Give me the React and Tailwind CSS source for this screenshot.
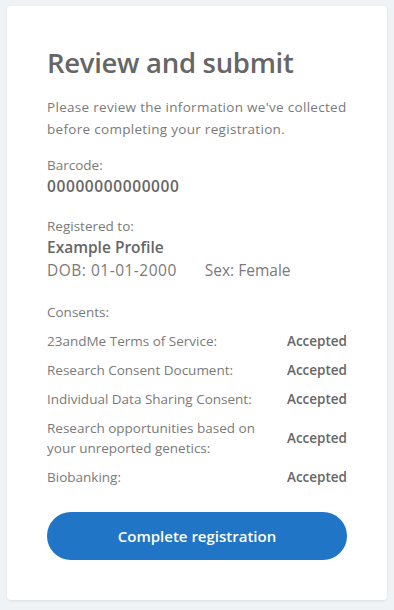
import React from 'react'

const consents = [
  { label: '23andMe Terms of Service:', value: 'Accepted' },
  { label: 'Research Consent Document:', value: 'Accepted' },
  { label: 'Individual Data Sharing Consent:', value: 'Accepted' },
  { label: 'Research opportunities based on your unreported genetics:', value: 'Accepted' },
  { label: 'Biobanking:', value: 'Accepted' },
]

export default function App() {
  return (
    <div
      className="min-h-screen bg-[#eff3f6] px-[7px] pt-[6px] pb-[10px]"
      style={{ fontFamily: '"Open Sans", Lato, sans-serif' }}
    >
      <div className="bg-white rounded-[4px] shadow-[0_1px_3px_rgba(0,0,0,0.08)] p-10 text-[#7a7a7a]">
        {/* Header */}
        <h1 className="text-[27.5px] leading-[34px] font-semibold tracking-[-0.3px] text-[#666666]">
          Review and submit
        </h1>
        <p className="mt-4 text-[13.5px] leading-[22px] tracking-[0.3px]">
          Please review the information we've collected before completing your registration.
        </p>

        {/* Barcode */}
        <div className="mt-[15px]">
          <div className="text-[13.5px] leading-[20px]">Barcode:</div>
          <div className="text-[15.5px] leading-[22px] font-semibold tracking-[0.6px] text-[#666666]">
            00000000000000
          </div>
        </div>

        {/* Profile */}
        <div className="mt-[19px]">
          <div className="text-[13.5px] leading-[20px]">Registered to:</div>
          <div className="text-[15.5px] leading-[22px] font-semibold text-[#666666]">
            Example Profile
          </div>
          <div className="flex gap-[28px] text-[15.5px] leading-[24px] text-[#7a7a7a]">
            <span className="tracking-[0.5px]">DOB: 01-01-2000</span>
            <span>Sex: Female</span>
          </div>
        </div>

        {/* Consents */}
        <div className="mt-[20px] flex flex-col gap-[9px] text-[13.5px] leading-[20px]">
          <div>Consents:</div>
          {consents.map((c, i) => (
            <div key={i} className="flex items-center justify-between">
              <span className="w-[230px]">{c.label}</span>
              <span className="font-semibold text-[#666666]">{c.value}</span>
            </div>
          ))}
        </div>

        <button className="mt-[25px] w-full h-12 rounded-full bg-[#2175c6] text-white text-[15px] font-semibold">
          Complete registration
        </button>
      </div>
    </div>
  )
}
